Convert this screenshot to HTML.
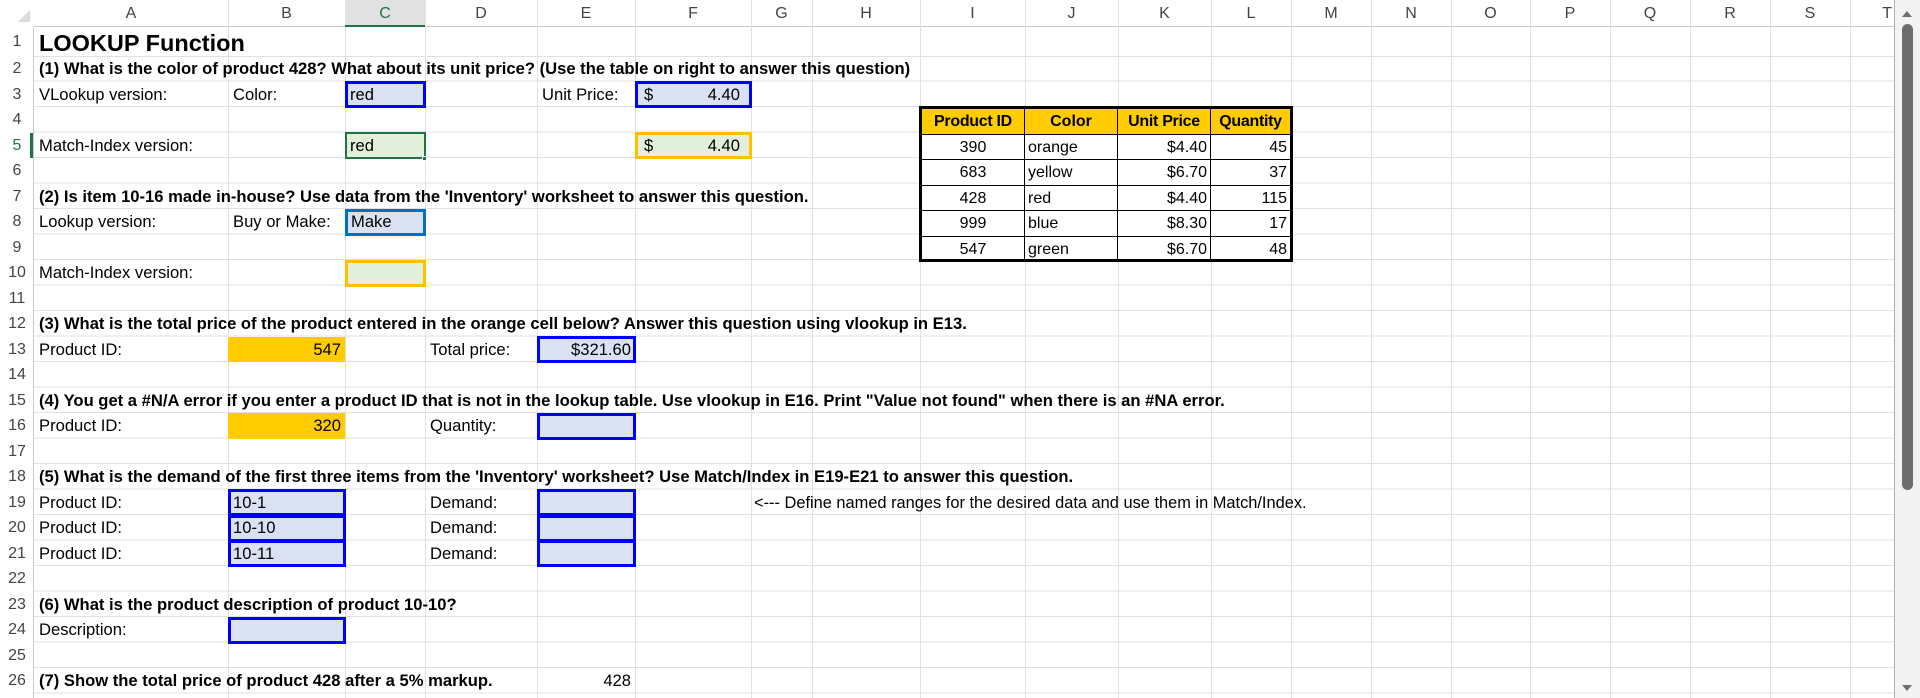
<!DOCTYPE html>
<html><head><meta charset="utf-8"><style>
*{margin:0;padding:0;box-sizing:border-box}
body{width:1920px;height:698px;overflow:hidden;background:#fff;position:relative;font-family:"Liberation Sans",Arial,sans-serif;color:#000}
.grid{position:absolute;left:34px;top:56px;width:1860px;height:642px;
background-image:repeating-linear-gradient(to bottom,transparent 0,transparent 24.5px,#e1e1e1 24.5px,#e1e1e1 25.5px)}
.v{position:absolute;top:0;width:1px;height:698px;background:#e1e1e1}
.colh{position:absolute;top:0;height:27px;line-height:27px;text-align:center;font-size:16px;color:#444}
.rowh{position:absolute;left:0;width:34px;text-align:center;font-size:16px;color:#444;height:25.5px;line-height:26px}
.t{position:absolute;font-size:16.6px;height:25.5px;line-height:26px;padding-left:3px;white-space:nowrap}
.b{font-weight:bold}
.box{position:absolute;height:25.5px}
.bl{border:3px solid #0000ff;background:#d9e1f2}
.or{border:3px solid #ffc000;background:#e2efda}
.yl{background:#ffcc00}
.r{text-align:right;padding-right:3px;padding-left:0}
.tb{position:absolute;font-size:16px;line-height:25px;height:25.5px;border-right:1px solid #000;border-bottom:1px solid #000;padding:0 3px;white-space:nowrap}
</style></head><body>
<div style="position:absolute;left:0;top:0;width:1895px;height:27px;background:#fff;border-bottom:1px solid #c8c8c8"></div>
<div style="position:absolute;left:0;top:27px;width:34px;height:671px;background:#fff;border-right:1px solid #c8c8c8"></div>
<div class="grid"></div>
<div style="position:absolute;left:34px;top:56px;width:1860px;height:1px;background:#e1e1e1"></div>
<div class="v" style="left:228px"></div><div class="v" style="left:345px"></div><div class="v" style="left:425px"></div><div class="v" style="left:537px"></div><div class="v" style="left:635px"></div><div class="v" style="left:751px"></div><div class="v" style="left:812px"></div><div class="v" style="left:920px"></div><div class="v" style="left:1025px"></div><div class="v" style="left:1118px"></div><div class="v" style="left:1211px"></div><div class="v" style="left:1291px"></div><div class="v" style="left:1371px"></div><div class="v" style="left:1451px"></div><div class="v" style="left:1530px"></div><div class="v" style="left:1610px"></div><div class="v" style="left:1690px"></div><div class="v" style="left:1770px"></div><div class="v" style="left:1850px"></div><div class="v" style="left:1894px;background:#b0b0b0"></div>
<div style="position:absolute;left:345px;top:0;width:80px;height:27px;background:#e1e1e1;border-bottom:2px solid #217346"></div>
<div style="position:absolute;left:30px;top:132.5px;width:3px;height:25.5px;background:#217346"></div>
<div style="position:absolute;left:0;top:0;width:34px;height:27px;background:#fff"></div>
<div style="position:absolute;left:18px;top:10px;width:0;height:0;border-left:12px solid transparent;border-bottom:12px solid #dcdcdc"></div>
<div class="colh" style="left:34px;width:194px">A</div><div class="colh" style="left:228px;width:117px">B</div><div class="colh" style="left:345px;width:80px;color:#217346">C</div><div class="colh" style="left:425px;width:112px">D</div><div class="colh" style="left:537px;width:98px">E</div><div class="colh" style="left:635px;width:116px">F</div><div class="colh" style="left:751px;width:61px">G</div><div class="colh" style="left:812px;width:108px">H</div><div class="colh" style="left:920px;width:105px">I</div><div class="colh" style="left:1025px;width:93px">J</div><div class="colh" style="left:1118px;width:93px">K</div><div class="colh" style="left:1211px;width:80px">L</div><div class="colh" style="left:1291px;width:80px">M</div><div class="colh" style="left:1371px;width:80px">N</div><div class="colh" style="left:1451px;width:79px">O</div><div class="colh" style="left:1530px;width:80px">P</div><div class="colh" style="left:1610px;width:80px">Q</div><div class="colh" style="left:1690px;width:80px">R</div><div class="colh" style="left:1770px;width:80px">S</div><div class="colh" style="left:1850px;width:44px;text-align:right;padding-right:2px">T</div>
<div class="rowh" style="top:29px">1</div><div class="rowh" style="top:56px">2</div><div class="rowh" style="top:81.5px">3</div><div class="rowh" style="top:107px">4</div><div class="rowh" style="top:132.5px;color:#217346">5</div><div class="rowh" style="top:158px">6</div><div class="rowh" style="top:183.5px">7</div><div class="rowh" style="top:209px">8</div><div class="rowh" style="top:234.5px">9</div><div class="rowh" style="top:260px">10</div><div class="rowh" style="top:285.5px">11</div><div class="rowh" style="top:311px">12</div><div class="rowh" style="top:336.5px">13</div><div class="rowh" style="top:362px">14</div><div class="rowh" style="top:387.5px">15</div><div class="rowh" style="top:413px">16</div><div class="rowh" style="top:438.5px">17</div><div class="rowh" style="top:464px">18</div><div class="rowh" style="top:489.5px">19</div><div class="rowh" style="top:515px">20</div><div class="rowh" style="top:540.5px">21</div><div class="rowh" style="top:566px">22</div><div class="rowh" style="top:591.5px">23</div><div class="rowh" style="top:617px">24</div><div class="rowh" style="top:642.5px">25</div><div class="rowh" style="top:668px">26</div>
<div class="box bl" style="left:345px;top:81px;width:81px;height:27px"></div>
<div class="box bl" style="left:635px;top:81px;width:117px;height:27px"></div>
<div class="box" style="left:345px;top:132px;width:81px;height:27px;border:2px solid #217346;background:#e2efda"></div>
<div style="position:absolute;left:422px;top:156px;width:5px;height:5px;background:#217346;border:1px solid #fff"></div>
<div class="box or" style="left:635px;top:132px;width:117px;height:27px"></div>
<div class="box" style="left:345px;top:208.5px;width:81px;height:27px;border:3px solid #0070c0;background:#d9e1f2"></div>
<div class="box or" style="left:345px;top:259.5px;width:81px;height:27px"></div>
<div class="box yl" style="left:228px;top:336.5px;width:117px"></div>
<div class="box bl" style="left:537px;top:336px;width:99px;height:27px"></div>
<div class="box yl" style="left:228px;top:413px;width:117px"></div>
<div class="box bl" style="left:537px;top:412.5px;width:99px;height:27px"></div>
<div class="box bl" style="left:228px;top:489px;width:118px;height:27px"></div>
<div class="box bl" style="left:228px;top:514.5px;width:118px;height:27px"></div>
<div class="box bl" style="left:228px;top:540px;width:118px;height:27px"></div>
<div class="box bl" style="left:537px;top:489px;width:99px;height:27px"></div>
<div class="box bl" style="left:537px;top:514.5px;width:99px;height:27px"></div>
<div class="box bl" style="left:537px;top:540px;width:99px;height:27px"></div>
<div class="box bl" style="left:228px;top:616.5px;width:118px;height:27px"></div>
<div class="t b" style="left:36px;top:28px;font-size:23.5px;line-height:30px;height:30px">LOOKUP Function</div>
<div class="t b" style="left:36px;top:56px">(1) What is the color of product 428? What about its unit price? (Use the table on right to answer this question)</div>
<div class="t" style="left:36px;top:81.5px">VLookup version:</div>
<div class="t" style="left:230px;top:81.5px">Color:</div>
<div class="t" style="left:347px;top:81.5px">red</div>
<div class="t" style="left:539px;top:81.5px">Unit Price:</div>
<div class="t" style="left:641px;top:81.5px">$</div>
<div class="t r" style="left:635px;top:81.5px;width:108px">4.40</div>
<div class="t" style="left:36px;top:132.5px">Match-Index version:</div>
<div class="t" style="left:347px;top:132.5px">red</div>
<div class="t" style="left:641px;top:132.5px">$</div>
<div class="t r" style="left:635px;top:132.5px;width:108px">4.40</div>
<div class="t b" style="left:36px;top:183.5px">(2) Is item 10-16 made in-house? Use data from the 'Inventory' worksheet to answer this question.</div>
<div class="t" style="left:36px;top:209px">Lookup version:</div>
<div class="t" style="left:230px;top:209px">Buy or Make:</div>
<div class="t" style="left:348px;top:209px">Make</div>
<div class="t" style="left:36px;top:260px">Match-Index version:</div>
<div class="t b" style="left:36px;top:311px">(3) What is the total price of the product entered in the orange cell below? Answer this question using vlookup in E13.</div>
<div class="t" style="left:36px;top:336.5px">Product ID:</div>
<div class="t r" style="left:228px;top:336.5px;width:116px">547</div>
<div class="t" style="left:427px;top:336.5px">Total price:</div>
<div class="t r" style="left:537px;top:336.5px;width:97px">$321.60</div>
<div class="t b" style="left:36px;top:387.5px">(4) You get a #N/A error if you enter a product ID that is not in the lookup table. Use vlookup in E16. Print "Value not found" when there is an #NA error.</div>
<div class="t" style="left:36px;top:413px">Product ID:</div>
<div class="t r" style="left:228px;top:413px;width:116px">320</div>
<div class="t" style="left:427px;top:413px">Quantity:</div>
<div class="t b" style="left:36px;top:464px">(5) What is the demand of the first three items from the 'Inventory' worksheet? Use Match/Index in E19-E21 to answer this question.</div>
<div class="t" style="left:36px;top:489.5px">Product ID:</div><div class="t" style="left:230px;top:489.5px">10-1</div><div class="t" style="left:427px;top:489.5px">Demand:</div>
<div class="t" style="left:36px;top:515px">Product ID:</div><div class="t" style="left:230px;top:515px">10-10</div><div class="t" style="left:427px;top:515px">Demand:</div>
<div class="t" style="left:36px;top:540.5px">Product ID:</div><div class="t" style="left:230px;top:540.5px">10-11</div><div class="t" style="left:427px;top:540.5px">Demand:</div>
<div class="t" style="left:751px;top:489.5px;font-size:16.4px">&lt;--- Define named ranges for the desired data and use them in Match/Index.</div>
<div class="t b" style="left:36px;top:591.5px">(6) What is the product description of product 10-10?</div>
<div class="t" style="left:36px;top:617px">Description:</div>
<div class="t b" style="left:36px;top:668px">(7) Show the total price of product 428 after a 5% markup.</div>
<div class="t r" style="left:537px;top:668px;width:97px">428</div>
<div style="position:absolute;left:919px;top:106px;width:374px;height:156px;border:3px solid #000;background:#fff"></div>
<div class="tb b" style="left:922px;top:109px;width:103px;background:#ffcc00;text-align:center;letter-spacing:-0.3px">Product ID</div>
<div class="tb b" style="left:1025px;top:109px;width:93px;background:#ffcc00;text-align:center">Color</div>
<div class="tb b" style="left:1118px;top:109px;width:93px;background:#ffcc00;text-align:center;letter-spacing:-0.3px">Unit Price</div>
<div class="tb b" style="left:1211px;top:109px;width:79px;background:#ffcc00;text-align:center;border-right:none;letter-spacing:-0.3px;padding:0 1px">Quantity</div>
<div class="tb" style="left:922px;top:134.5px;width:103px;text-align:center">390</div><div class="tb" style="left:1025px;top:134.5px;width:93px">orange</div><div class="tb" style="left:1118px;top:134.5px;width:93px;text-align:right">$4.40</div><div class="tb" style="left:1211px;top:134.5px;width:79px;text-align:right;border-right:none">45</div>
<div class="tb" style="left:922px;top:160px;width:103px;text-align:center">683</div><div class="tb" style="left:1025px;top:160px;width:93px">yellow</div><div class="tb" style="left:1118px;top:160px;width:93px;text-align:right">$6.70</div><div class="tb" style="left:1211px;top:160px;width:79px;text-align:right;border-right:none">37</div>
<div class="tb" style="left:922px;top:185.5px;width:103px;text-align:center">428</div><div class="tb" style="left:1025px;top:185.5px;width:93px">red</div><div class="tb" style="left:1118px;top:185.5px;width:93px;text-align:right">$4.40</div><div class="tb" style="left:1211px;top:185.5px;width:79px;text-align:right;border-right:none">115</div>
<div class="tb" style="left:922px;top:211px;width:103px;text-align:center">999</div><div class="tb" style="left:1025px;top:211px;width:93px">blue</div><div class="tb" style="left:1118px;top:211px;width:93px;text-align:right">$8.30</div><div class="tb" style="left:1211px;top:211px;width:79px;text-align:right;border-right:none">17</div>
<div class="tb" style="left:922px;top:236.5px;width:103px;text-align:center;border-bottom:none;height:22.5px">547</div><div class="tb" style="left:1025px;top:236.5px;width:93px;border-bottom:none;height:22.5px">green</div><div class="tb" style="left:1118px;top:236.5px;width:93px;text-align:right;border-bottom:none;height:22.5px">$6.70</div><div class="tb" style="left:1211px;top:236.5px;width:79px;text-align:right;border:none;height:22.5px">48</div>
<div style="position:absolute;left:1895px;top:0;width:25px;height:698px;background:#f3f3f3"></div>
<div style="position:absolute;left:1902px;top:24px;width:11px;height:466px;background:#6e6e6e;border-radius:6px"></div>
<div style="position:absolute;left:1902px;top:11px;width:0;height:0;border-left:5.5px solid transparent;border-right:5.5px solid transparent;border-bottom:6px solid #6e6e6e"></div>
<div style="position:absolute;left:1902px;top:685px;width:0;height:0;border-left:5.5px solid transparent;border-right:5.5px solid transparent;border-top:6px solid #6e6e6e"></div>
</body></html>
